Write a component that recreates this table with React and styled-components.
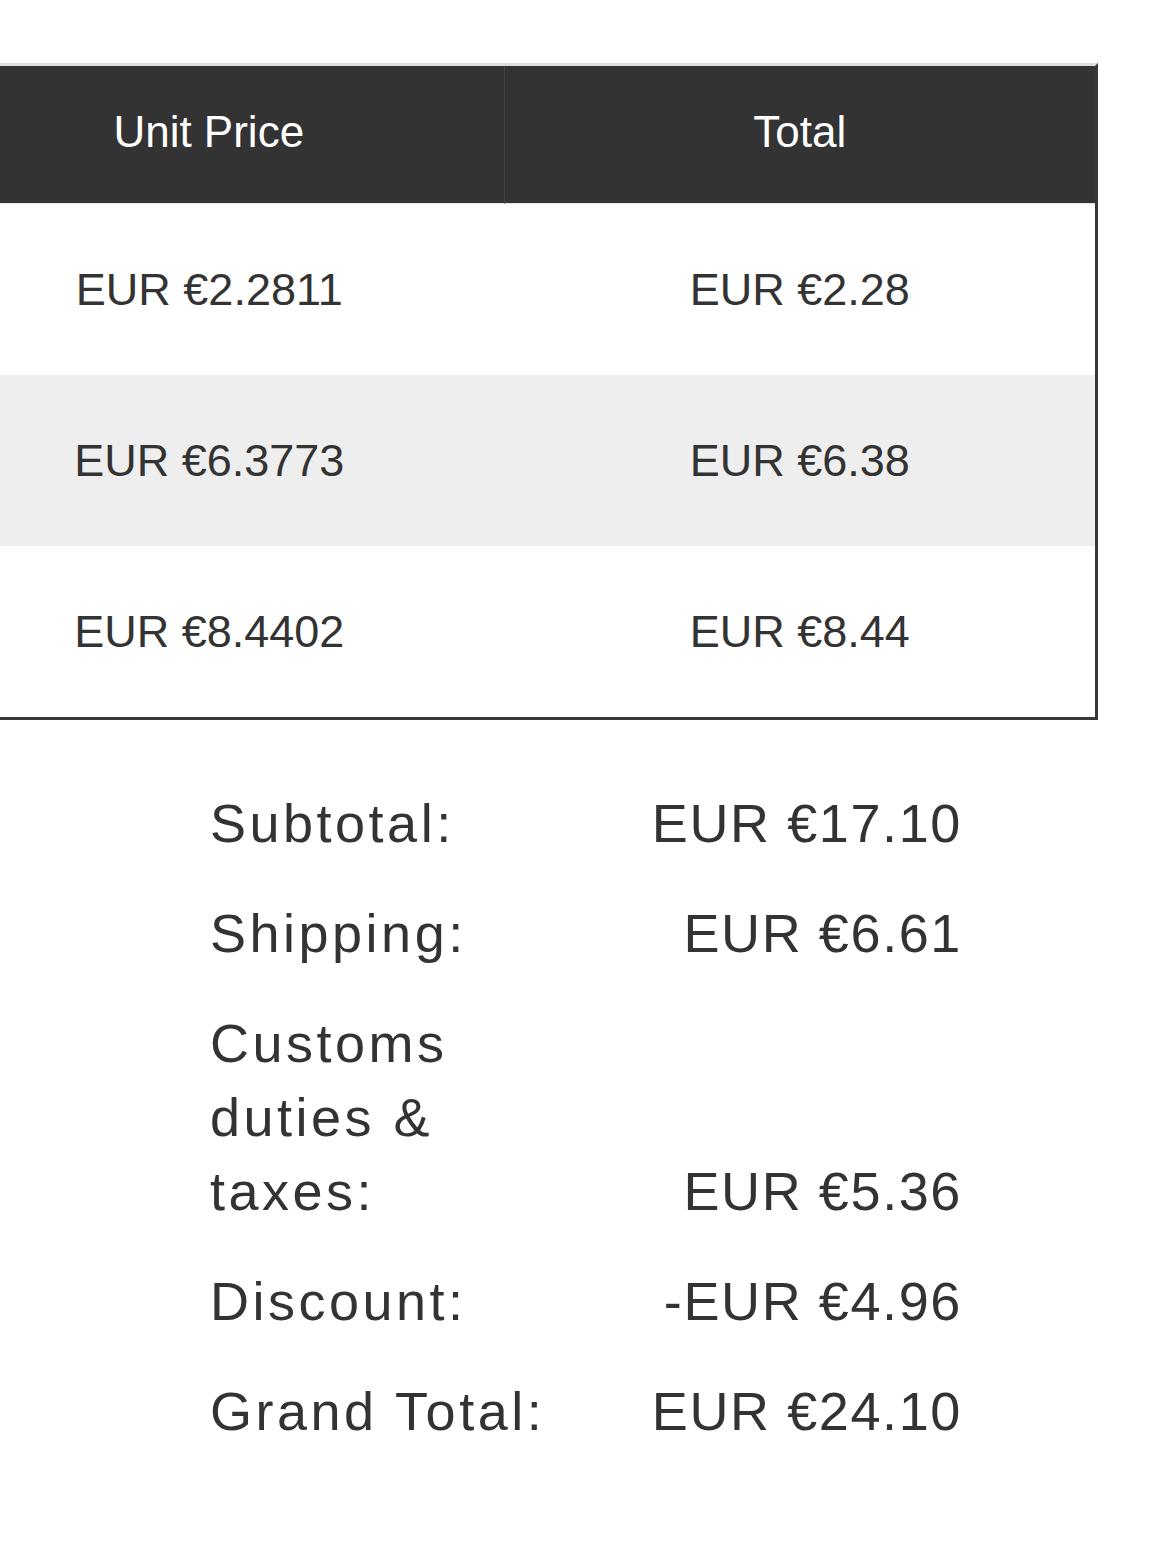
import React from "react";
import styled, { createGlobalStyle } from "styled-components";

const textDark = "#333333";

const lines = [
    { unit: "EUR €2.2811", total: "EUR €2.28" },
    { unit: "EUR €6.3773", total: "EUR €6.38" },
    { unit: "EUR €8.4402", total: "EUR €8.44" },
];

const summary = [
    { label: "Subtotal:", value: "EUR €17.10" },
    { label: "Shipping:", value: "EUR €6.61" },
    { label: "Customs duties & taxes:", value: "EUR €5.36" },
    { label: "Discount:", value: "-EUR €4.96" },
    { label: "Grand Total:", value: "EUR €24.10" },
];

export default function App() {
    return (
        <>
            <GlobalStyle />
            <Page>
                <TableViewport>
                    <ItemsTable>
                        <thead>
                            <tr>
                                <HeadCell>Unit Price</HeadCell>
                                <HeadCell last>Total</HeadCell>
                            </tr>
                        </thead>
                        <tbody>
                            {lines.map((line, i) => (
                                <BodyRow key={i} striped={i % 2 === 1}>
                                    <BodyCell>{line.unit}</BodyCell>
                                    <BodyCell last>{line.total}</BodyCell>
                                </BodyRow>
                            ))}
                        </tbody>
                    </ItemsTable>
                </TableViewport>
                <Summary>
                    {summary.map((row) => (
                        <React.Fragment key={row.label}>
                            <SummaryLabel>{row.label}</SummaryLabel>
                            <SummaryValue>{row.value}</SummaryValue>
                        </React.Fragment>
                    ))}
                </Summary>
            </Page>
        </>
    );
}

const GlobalStyle = createGlobalStyle`
    html, body {
        margin: 0;
        padding: 0;
        background: #ffffff;
    }
    body {
        font-family: "Liberation Sans", Arial, Helvetica, sans-serif;
        color: ${textDark};
    }
`;

const Page = styled.div`
    width: 1170px;
    min-height: 1542px;
    box-sizing: border-box;
    padding-top: 63px;
    overflow: hidden;
`;

/* the table is wider than the screen and scrolled to its right end */
const TableViewport = styled.div`
    width: 1098px;
    overflow: hidden;
`;

const ItemsTable = styled.table`
    margin-left: -86px;
    width: 1184px;
    border-collapse: separate;
    border-spacing: 0;
    table-layout: fixed;
    border-top: 3px solid #dddddd;
    border-right: 3px solid #383838;
    border-bottom: 3px solid #383838;
`;

const HeadCell = styled.th`
    height: 132px;
    padding: 0 0 5px;
    background: #333333;
    color: #ffffff;
    font-weight: normal;
    font-size: 44px;
    text-align: center;
    vertical-align: middle;
    border-right: ${(p) => (p.last ? "none" : "1px solid #444444")};
    border-bottom: 1px solid #e6e6e6;
`;

const BodyRow = styled.tr`
    background: ${(p) => (p.striped ? "#eeeeee" : "#ffffff")};
`;

const BodyCell = styled.td`
    height: 171px;
    padding: 0;
    font-size: 45px;
    text-align: center;
    vertical-align: middle;
    color: ${textDark};
`;

const Summary = styled.div`
    display: grid;
    grid-template-columns: 340px 410px;
    margin: 48px 0 0 210px;
    align-items: end;
    font-size: 54px;
    line-height: 74px;
    color: ${textDark};
`;

const SummaryLabel = styled.div`
    padding: 18px 0;
    letter-spacing: 3.5px;
`;

const SummaryValue = styled.div`
    padding: 18px 0;
    text-align: right;
    letter-spacing: 1.6px;
    margin-right: -2px;
`;
